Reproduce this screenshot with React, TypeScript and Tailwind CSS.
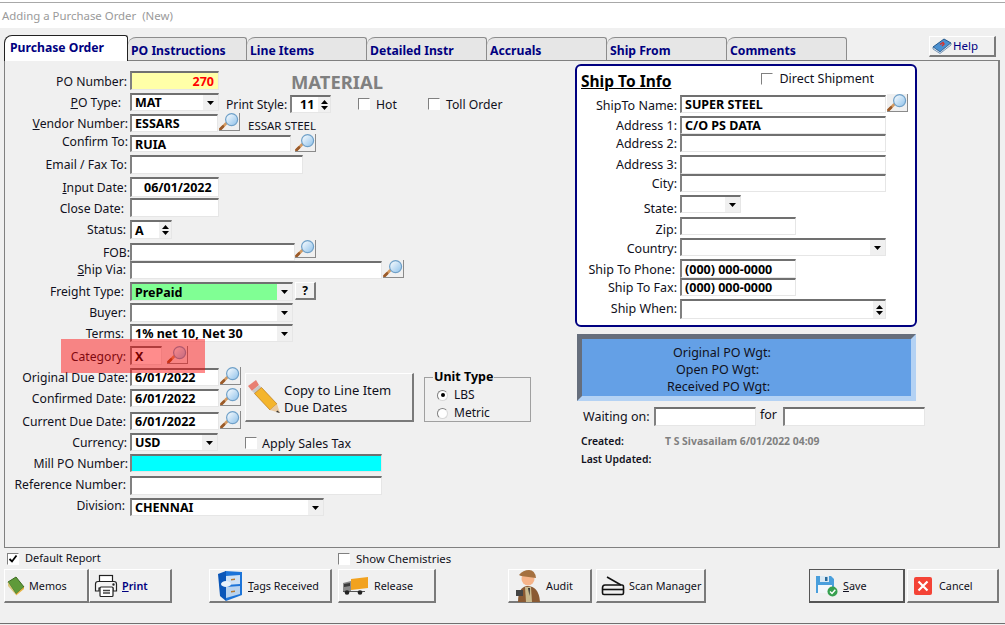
import React from "react";

const sunken = "border-t-2 border-l-2 border-r border-b border-t-[#707070] border-l-[#808080] border-r-[#e6e6e6] border-b-[#e6e6e6]";
const raised = "border-t border-l border-t-white border-l-white border-r-2 border-b-2 border-r-[#7a7a7a] border-b-[#7a7a7a] bg-[#f0f0f0]";

function Triangle({ up = false }: { up?: boolean }) {
  return (
    <svg width="7" height="4" viewBox="0 0 7 4" className="block">
      <path d={up ? "M0 4L3.5 0L7 4Z" : "M0 0L7 0L3.5 4Z"} fill="#000" />
    </svg>
  );
}

function Field({ className = "", value, valueClass = "", children }: { className?: string; value?: string; valueClass?: string; children?: React.ReactNode }) {
  return (
    <div className={`${sunken} flex items-center shrink-0 overflow-hidden bg-white ${className}`}>
      {value && <span className={`pl-[3px] pt-[2px] font-bold text-[12.5px] leading-none whitespace-nowrap ${valueClass || "text-black"}`}>{value}</span>}
      {children}
    </div>
  );
}

function Select({ className = "", value, fill = "" }: { className?: string; value?: string; fill?: string }) {
  return (
    <div className={`${sunken} flex items-stretch shrink-0 overflow-hidden bg-white ${className}`}>
      <div className={`flex-1 flex items-center min-w-0 ${fill}`}>
        {value && <span className="pl-[3px] pt-[2px] font-bold text-[12.5px] leading-none text-black whitespace-nowrap">{value}</span>}
      </div>
      <div className="w-[15px] bg-[#f0f0f0] flex items-center justify-center"><Triangle /></div>
    </div>
  );
}

function Spin({ className = "", value, valueClass = "pl-[3px]" }: { className?: string; value?: string; valueClass?: string }) {
  return (
    <div className={`${sunken} flex items-stretch shrink-0 overflow-hidden bg-white ${className}`}>
      <div className="flex-1 flex items-center min-w-0">
        {value && <span className={`pt-[2px] font-bold text-[12.5px] leading-none text-black ${valueClass}`}>{value}</span>}
      </div>
      <div className="w-[12px] bg-[#f0f0f0] flex flex-col items-center justify-center gap-[2px]"><Triangle up /><Triangle /></div>
    </div>
  );
}

function SearchBtn({ className = "" }: { className?: string }) {
  return (
    <div className={`w-[21px] h-[18px] shrink-0 bg-[#f0f0f0] border-r border-b border-r-[#8a8a8a] border-b-[#8a8a8a] ${className}`}>
      <svg width="20" height="17" viewBox="0 0 20 17" className="block">
        <defs>
          <linearGradient id="lens" x1="0" y1="0" x2="1" y2="1">
            <stop offset="0" stopColor="#ffffff" />
            <stop offset="1" stopColor="#8cc0ea" />
          </linearGradient>
        </defs>
        <path d="M1.5 16L7 10.5" stroke="#d39a62" strokeWidth="2.6" strokeLinecap="round" />
        <path d="M1.5 16L4 13.5" stroke="#9a5a2a" strokeWidth="2.6" strokeLinecap="round" />
        <circle cx="12.6" cy="6.6" r="6" fill="url(#lens)" stroke="#6fa0c8" strokeWidth="1.2" />
      </svg>
    </div>
  );
}

function Check({ checked = false, className = "" }: { checked?: boolean; className?: string }) {
  return (
    <span className={`w-[12px] h-[12px] shrink-0 block border-t border-l border-t-[#808080] border-l-[#808080] border-r border-b border-r-white border-b-white bg-white ${className}`}>
      {checked && (
        <svg width="10" height="10" viewBox="0 0 10 10" className="block">
          <path d="M1.5 5L4 7.5L8.5 1.5" stroke="#000" strokeWidth="1.8" fill="none" />
        </svg>
      )}
    </span>
  );
}

function Radio({ on = false }: { on?: boolean }) {
  return (
    <span className="w-[11px] h-[11px] rounded-full bg-white border border-t-[#808080] border-l-[#808080] border-r-[#d8d8d8] border-b-[#d8d8d8] flex items-center justify-center shrink-0">
      {on && <span className="w-[4px] h-[4px] rounded-full bg-black block" />}
    </span>
  );
}

function Row({ h, label, labelClass = "", children }: { h: string; label: React.ReactNode; labelClass?: string; children?: React.ReactNode }) {
  return (
    <div className={`flex items-start ${h}`}>
      <div className={`w-[125px] shrink-0 text-right pt-[1px] text-[12.2px] leading-[18px] whitespace-nowrap ${labelClass}`}>{label}</div>
      {children}
    </div>
  );
}

function ShipRow({ h, label, labelClass = "pr-[3px]", children }: { h: string; label: React.ReactNode; labelClass?: string; children?: React.ReactNode }) {
  return (
    <div className={`flex items-start ${h}`}>
      <div className={`w-[103px] shrink-0 text-right pt-[1px] leading-[18px] whitespace-nowrap ${labelClass}`}>{label}</div>
      {children}
    </div>
  );
}

function Tab({ label, active = false, className = "" }: { label: string; active?: boolean; className?: string }) {
  if (active) {
    return (
      <div className={`h-[26px] -mb-[1px] z-10 bg-white border-t border-l border-r border-[#222] rounded-tl-[8px] rounded-tr-[3px] flex items-center pl-[5px] font-bold text-[12.2px] text-[#000080] ${className}`}>
        {label}
      </div>
    );
  }
  return (
    <div className={`h-[23px] bg-[#e6e6e6] border-t border-r border-[#8c8c8c] rounded-tl-[8px] rounded-tr-[3px] flex items-center pl-[3px] pt-[4px] font-bold text-[12.2px] text-[#000080] ${className}`}>
      {label}
    </div>
  );
}

function Btn({ className = "", icon, children }: { className?: string; icon?: React.ReactNode; children: React.ReactNode }) {
  return (
    <div className={`h-[34px] shrink-0 flex items-center text-[10.8px] whitespace-nowrap ${raised} ${className}`}>
      {icon}
      <span className="pt-[1px]">{children}</span>
    </div>
  );
}

const BookIcon = () => (
  <svg width="18" height="20" viewBox="0 0 18 20" className="ml-[2px] mr-[4px] shrink-0">
    <path d="M1 6L9 1L17 11L9 18Z" fill="#5f9a3a" stroke="#3d6b22" strokeWidth="1" />
    <path d="M1 6L1 10L9 19L9 18Z" fill="#d9c77a" />
    <path d="M9 18L17 11L17 13L9 19.5Z" fill="#e9b341" />
  </svg>
);
const PrinterIcon = () => (
  <svg width="24" height="24" viewBox="0 0 24 24" className="ml-[4px] mr-[4px] shrink-0" fill="none" stroke="#222" strokeWidth="1.2">
    <rect x="5.5" y="1.5" width="13" height="7" fill="#fff" />
    <path d="M4 7.5H20Q22.5 7.5 22.5 10V17H19V14H5V17H1.5V10Q1.5 7.5 4 7.5Z" fill="#f4f4f4" />
    <rect x="6" y="13" width="13" height="9.5" rx="1" fill="#fff" />
    <path d="M9 16.5H16M9 19H16" stroke="#444" strokeWidth="1.4" />
    <circle cx="19.5" cy="10.5" r=".6" fill="#222" />
  </svg>
);
const CabinetIcon = () => (
  <svg width="26" height="32" viewBox="0 0 26 32" className="ml-[7px] mr-[5px] shrink-0">
    <path d="M8 1L25 2V25L9 31Z" fill="#1c74d8" />
    <path d="M1 4L9 1V31L3 26Z" fill="#0a56b8" />
    <path d="M9 6L23 5V14L9 15Z" fill="#cfe2f5" />
    <path d="M9 17L23 16V24L9 28Z" fill="#b9d3ee" />
    <path d="M14 9L18 8.5V10L14 10.5ZM14 21L18 20.5V22L14 22.5Z" fill="#b57a32" />
    <ellipse cx="9" cy="14" rx="5" ry="3" fill="#e8f1fa" />
  </svg>
);
const TruckIcon = () => (
  <svg width="26" height="18" viewBox="0 0 26 18" className="ml-[4px] mr-[5px] shrink-0">
    <path d="M8 2L25 0V11L8 13Z" fill="#f2a21f" />
    <path d="M0 6L8 4V14H0Z" fill="#8a8a8a" />
    <path d="M1 7L7 6V9L1 10Z" fill="#3a3a3a" />
    <path d="M0 14H22V15H0Z" fill="#555" />
    <circle cx="4" cy="15.5" r="2.3" fill="#222" />
    <circle cx="17" cy="15.5" r="2.3" fill="#222" />
  </svg>
);
const DetectiveIcon = () => (
  <svg width="30" height="33" viewBox="0 0 30 33" className="ml-[3px] mr-[4px] shrink-0">
    <path d="M6 33Q6 18 15 17Q27 17 28 33Z" fill="#8a5a33" />
    <path d="M13 18L19 18L20 33H14Z" fill="#c9b98e" />
    <path d="M16 19L18 19L17.5 27Z" fill="#333" />
    <circle cx="16" cy="10" r="6.5" fill="#f6b48a" />
    <path d="M7 6Q11 1 17 1Q23 1 24 9L9 7Z" fill="#a4703f" />
    <rect x="4" y="21" width="7" height="6" fill="#444" />
  </svg>
);
const ScannerIcon = () => (
  <svg width="24" height="20" viewBox="0 0 24 20" className="ml-[4px] mr-[4px] shrink-0" fill="none" stroke="#111" strokeWidth="1.6">
    <path d="M6 1L20 9" />
    <path d="M4 9H21Q22.5 9 22.5 11V17Q22.5 18.5 21 18.5H3Q1.5 18.5 1.5 17V12Q1.5 9 4 9Z" />
    <path d="M2 13.5H22" />
  </svg>
);
const SaveIcon = () => (
  <svg width="24" height="22" viewBox="0 0 24 22" className="ml-[5px] mr-[4px] shrink-0">
    <path d="M1 1H16L19 4V18H1Z" fill="#4a9fdc" />
    <rect x="5" y="1" width="9" height="6" fill="#d9e8f3" />
    <rect x="10" y="2" width="2.5" height="4" fill="#2a6a9a" />
    <rect x="3" y="10" width="14" height="8" fill="#f3f7fa" />
    <circle cx="17.5" cy="16.5" r="5" fill="#37a04f" />
    <path d="M15 16.5L17 18.5L20.3 14.7" stroke="#fff" strokeWidth="1.4" fill="none" />
  </svg>
);
const CancelIcon = () => (
  <svg width="18" height="18" viewBox="0 0 18 18" className="ml-[6px] mr-[7px] shrink-0">
    <rect width="18" height="18" rx="2" fill="#f44336" />
    <path d="M4.5 4.5L13.5 13.5M13.5 4.5L4.5 13.5" stroke="#fff" strokeWidth="2.2" />
  </svg>
);
const HelpIcon = () => (
  <svg width="20" height="16" viewBox="0 0 20 16" className="ml-[2px] mr-[1px] shrink-0">
    <path d="M1 9L12 1L19 5L8 14Z" fill="#4a90d0" stroke="#24588c" strokeWidth="1" />
    <path d="M1 9L1 11L8 15.5L19 7L19 5L8 14Z" fill="#e8eef5" stroke="#24588c" strokeWidth=".6" />
    <path d="M8 6.5L11 4.5L12 6L10 8" stroke="#d8322a" strokeWidth="1.4" fill="none" />
  </svg>
);
const PencilIcon = () => (
  <svg width="34" height="34" viewBox="0 0 34 34" className="shrink-0">
    <path d="M9 0L1 6L5 11L12 5Z" fill="#e87f72" />
    <path d="M5 11L12 5L14.5 7.5L7.5 13.5Z" fill="#c8c8c8" />
    <path d="M7.5 13.5L14.5 7.5L30 24L23 30Z" fill="#f4b52c" stroke="#b9791a" strokeWidth=".7" />
    <path d="M23 30L30 24L33 33Z" fill="#e8c9a0" />
    <path d="M30.5 30.5L33 33L29 32Z" fill="#333" />
  </svg>
);

export default function App() {
  return (
    <div className="w-[1005px] h-[625px] overflow-hidden bg-[#f0f0f0] flex flex-col text-[12.5px] text-[#101020] font-['Noto_Sans',sans-serif]">
      <div className="h-[2px] shrink-0 bg-white" />
      <div className="h-[1px] shrink-0 bg-[#a8a8a8]" />
      <div className="h-[25px] shrink-0 bg-white flex items-center pl-[2px] pt-[1px] text-[11.4px] text-[#9a9a9a] whitespace-pre">Adding a Purchase Order  (New)</div>

      <div className="h-[32px] shrink-0 pl-[4px] pr-[9px] flex items-end">
        <Tab active label="Purchase Order" className="w-[124px]" />
        <Tab label="PO Instructions" className="w-[119px]" />
        <Tab label="Line Items" className="w-[120px]" />
        <Tab label="Detailed Instr" className="w-[120px]" />
        <Tab label="Accruals" className="w-[120px]" />
        <Tab label="Ship From" className="w-[120px]" />
        <Tab label="Comments" className="w-[120px]" />
        <div className={`ml-[82px] mb-[3px] w-[67px] h-[21px] flex items-center text-[11.5px] text-[#000080] ${raised}`}>
          <HelpIcon />Help
        </div>
      </div>

      <div className="relative h-[488px] shrink-0 mx-[4px] w-[996px] border border-[#808080] border-r-2 flex">
        <div className="absolute left-[56px] top-[278px] w-[144px] h-[34px] bg-[#ff0000]/45 z-10" />

        <div className="w-[570px] shrink-0 pt-[10px]">
          <Row h="h-[22px]" label="PO Number:" labelClass="mt-[1px] pr-[3px]">
            <Field className="w-[89px] h-[19px] !bg-[#ffffa8] justify-end" value="270" valueClass="text-[#ff0000] pr-[4px]" />
            <span className="ml-[72px] font-bold text-[18.4px] leading-[22px] text-[#808080]">MATERIAL</span>
          </Row>
          <Row h="h-[21px]" label={<><u>P</u>O Type:</>} labelClass="pr-[9px]">
            <Select className="w-[89px] h-[18px]" value="MAT" />
            <span className="ml-[7px] mt-[3px] w-[60px] leading-[18px] text-[12.2px] whitespace-nowrap">Print Style:</span>
            <Spin className="ml-[4px] mt-[2px] w-[41px] h-[18px]" value="11" valueClass="pl-[8px]" />
            <Check className="ml-[27px] mt-[5px]" />
            <span className="ml-[6px] mt-[3px] w-[18px] leading-[18px] text-[12.2px]">Hot</span>
            <Check className="ml-[34px] mt-[5px]" />
            <span className="ml-[6px] mt-[3px] leading-[18px] text-[12.2px]">Toll Order</span>
          </Row>
          <Row h="h-[21px]" label={<><u>V</u>endor Number:</>} labelClass="pr-[2px]">
            <Field className="w-[88px] h-[18px]" value="ESSARS" />
            <SearchBtn className="ml-[1px] -mt-[1px]" />
            <span className="ml-[8px] mt-[3px] leading-[18px] text-[11.5px]">ESSAR STEEL</span>
          </Row>
          <Row h="h-[20px]" label="Confirm To:" labelClass="-mt-[3px] pr-[2px]">
            <Field className="w-[161px] h-[17px] items-end" value="RUIA" />
            <SearchBtn className="ml-[4px] -mt-[1px]" />
          </Row>
          <Row h="h-[22px]" label="Email / Fax To:" labelClass="pr-[3px]">
            <Field className="w-[173px] h-[19px]" />
          </Row>
          <Row h="h-[21px]" label={<><u>I</u>nput Date:</>} labelClass="mt-[1px] pr-[3px]">
            <Field className="w-[89px] h-[20px]" value="06/01/2022" valueClass="pl-[12px] text-black" />
          </Row>
          <Row h="h-[22px]" label="Close Date:" labelClass="mt-[1px] pr-[6px]">
            <Field className="w-[89px] h-[19px]" />
          </Row>
          <Row h="h-[23px]" label="Status:" labelClass="pr-[4px]">
            <Spin className="w-[42px] h-[19px]" value="A" />
          </Row>
          <Row h="h-[18px]" label="FOB:" labelClass="pr-[0px]">
            <Field className="w-[165px] h-[18px]" />
            <SearchBtn className="-mt-[3px]" />
          </Row>
          <Row h="h-[21px]" label={<><u>S</u>hip Via:</>} labelClass="-mt-[1px] pr-[4px]">
            <Field className="w-[252px] h-[18px]" />
            <SearchBtn className="ml-[1px] -mt-[1px]" />
          </Row>
          <Row h="h-[21px]" label="Freight Type:" labelClass="pr-[6px]">
            <Select className="w-[163px] h-[19px]" value="PrePaid" fill="bg-[#80ff94]" />
            <div className={`ml-[2px] w-[21px] h-[18px] flex items-center justify-center font-bold text-[12px] text-black ${raised}`}>?</div>
          </Row>
          <Row h="h-[21px]" label="Buyer:" labelClass="pr-[4px]">
            <Select className="w-[163px] h-[19px]" />
          </Row>
          <Row h="h-[22px]" label="Terms:" labelClass="pr-[6px]">
            <Select className="w-[163px] h-[18px]" value="1% net 10, Net 30" />
          </Row>
          <Row h="h-[22px]" label="Category:" labelClass="mt-[1px] pr-[4px]">
            <Field className="w-[32px] h-[19px]" value="X" />
            <SearchBtn className="ml-[5px]" />
          </Row>

          <div className="flex items-start">
            <div className="w-[240px] shrink-0">
              <Row h="h-[21px]" label="Original Due Date:" labelClass="pr-[2px]">
                <Field className="w-[89px] h-[18px]" value="6/01/2022" />
                <SearchBtn className="ml-[1px] -mt-[1px]" />
              </Row>
              <Row h="h-[23px]" label="Confirmed Date:" labelClass="pr-[4px]">
                <Field className="w-[89px] h-[18px]" value="6/01/2022" />
                <SearchBtn className="ml-[1px] -mt-[1px]" />
              </Row>
              <Row h="h-[21px]" label="Current Due Date:" labelClass="pr-[4px]">
                <Field className="w-[89px] h-[18px]" value="6/01/2022" />
                <SearchBtn className="ml-[1px] -mt-[1px]" />
              </Row>
            </div>
            <div className={`mt-[5px] w-[169px] h-[49px] flex items-center pl-[1px] ${raised}`}>
              <PencilIcon />
              <div className="ml-[3px] pt-[3px] leading-[17px] text-[13px]">Copy to Line Item<br />Due Dates</div>
            </div>
            <fieldset className="ml-[10px] mt-[3px] w-[107px] h-[51px] border border-[#a0a0a0] pl-[12px] pt-[3px]">
              <legend className="font-bold text-[12.5px] leading-[12px] text-black ml-[-4px] px-[1px]">Unit Type</legend>
              <div className="flex items-center gap-[6px] leading-[18px] text-[12px]"><Radio on />LBS</div>
              <div className="flex items-center gap-[6px] leading-[18px] text-[12px]"><Radio />Metric</div>
            </fieldset>
          </div>

          <Row h="h-[21px]" label="Currency:" labelClass="pr-[3px]">
            <Select className="w-[88px] h-[18px]" value="USD" />
            <Check className="ml-[27px] mt-[4px]" />
            <span className="ml-[5px] mt-[2px] leading-[18px] text-[12.5px]">Apply Sales Tax</span>
          </Row>
          <Row h="h-[22px]" label="Mill PO Number:" labelClass="pr-[2px]">
            <Field className="w-[252px] h-[18px] !bg-[#00ffff]" />
          </Row>
          <Row h="h-[22px]" label="Reference Number:" labelClass="-mt-[1px] pr-[4px]">
            <Field className="w-[252px] h-[19px]" />
          </Row>
          <Row h="h-[18px]" label="Division:" labelClass="-mt-[2px] pr-[5px]">
            <Select className="w-[194px] h-[18px]" value="CHENNAI" />
          </Row>
        </div>

        <div className="w-[350px] shrink-0 pt-[3px]">
          <div className="w-[342px] h-[263px] bg-white border-2 border-[#000080] rounded-[6px]">
            <div className="h-[29px] flex items-center">
              <span className="ml-[4px] pt-[2px] font-bold text-[15.5px] text-black underline">Ship To Info</span>
              <Check className="ml-[90px] -mt-[4px]" />
              <span className="ml-[6px] -mt-[2px]">Direct Shipment</span>
            </div>
            <ShipRow h="h-[21px]" label="ShipTo Name:" labelClass="mt-[1px] pr-[3px]">
              <Field className="w-[206px] h-[18px]" value="SUPER STEEL" />
              <SearchBtn className="ml-[1px] -mt-[1px]" />
            </ShipRow>
            <ShipRow h="h-[18px]" label="Address 1:">
              <Field className="w-[206px] h-[18px]" value="C/O PS DATA" />
            </ShipRow>
            <ShipRow h="h-[21px]" label="Address 2:">
              <Field className="w-[206px] h-[18px]" />
            </ShipRow>
            <ShipRow h="h-[19px]" label="Address 3:">
              <Field className="w-[206px] h-[19px]" />
            </ShipRow>
            <ShipRow h="h-[21px]" label="City:">
              <Field className="w-[206px] h-[18px]" />
            </ShipRow>
            <ShipRow h="h-[22px]" label="State:" labelClass="mt-[4px] pr-[3px]">
              <Select className="w-[61px] h-[18px]" />
            </ShipRow>
            <ShipRow h="h-[21px]" label="Zip:" labelClass="mt-[3px] pr-[3px]">
              <Field className="w-[116px] h-[18px]" />
            </ShipRow>
            <ShipRow h="h-[21px]" label="Country:" labelClass="mt-[1px] pr-[3px]">
              <Select className="w-[206px] h-[18px]" />
            </ShipRow>
            <ShipRow h="h-[19px]" label="Ship To Phone:" labelClass="mt-[1px] pr-[5px]">
              <Field className="w-[116px] h-[19px]" value="(000) 000-0000" />
            </ShipRow>
            <ShipRow h="h-[21px]" label="Ship To Fax:">
              <Field className="w-[116px] h-[18px]" value="(000) 000-0000" />
            </ShipRow>
            <ShipRow h="h-[20px]" label="Ship When:">
              <Spin className="w-[206px] h-[20px]" />
            </ShipRow>
          </div>

          <div className="mt-[7px] ml-[2px] w-[339px] h-[67px] bg-[#64a0e6] border-[5px] border-t-[#666e7c] border-l-[#666e7c] border-r-[#b4d2f4] border-b-[#b4d2f4] flex flex-col items-start pt-[5px] leading-[17px] text-[12.5px]">
            <span className="ml-[91px]">Original PO Wgt:</span>
            <span className="ml-[94px]">Open PO Wgt:</span>
            <span className="ml-[85px]">Received PO Wgt:</span>
          </div>

          <div className="mt-[5px] flex items-center">
            <span className="ml-[8px] w-[71px] pt-[2px]">Waiting on:</span>
            <Field className="w-[102px] h-[19px]" />
            <span className="ml-[4px] w-[23px] -mt-[2px]">for</span>
            <Field className="w-[142px] h-[19px]" />
          </div>
          <div className="mt-[6px] ml-[6px] flex items-center h-[18px] text-[10.4px] font-semibold">
            <span className="w-[84px]">Created:</span>
            <span className="text-[#808080] font-bold">T S Sivasailam 6/01/2022 04:09</span>
          </div>
          <div className="ml-[6px] flex items-center h-[18px] text-[10.4px] font-semibold">Last Updated:</div>
        </div>
      </div>

      <div className="h-[21px] shrink-0 flex items-center text-[11px]">
        <Check checked className="ml-[7px]" />
        <span className="ml-[6px] w-[76px] whitespace-nowrap">Default Report</span>
        <Check className="ml-[237px]" />
        <span className="ml-[6px] text-[11.4px]">Show Chemistries</span>
      </div>
      <div className="flex shrink-0 pl-[4px]">
        <Btn className="w-[85px]" icon={<BookIcon />}>Memos</Btn>
        <Btn className="w-[83px] font-semibold text-[#000080]" icon={<PrinterIcon />}><u>P</u>rint</Btn>
        <Btn className="ml-[37px] w-[123px]" icon={<CabinetIcon />}><u>T</u>ags Received</Btn>
        <Btn className="ml-[6px] w-[98px]" icon={<TruckIcon />}>Release</Btn>
        <Btn className="ml-[72px] w-[84px]" icon={<DetectiveIcon />}>Audit</Btn>
        <Btn className="ml-[4px] w-[110px]" icon={<ScannerIcon />}>Scan Manager</Btn>
        <Btn className="ml-[103px] w-[96px] !border-t-[#555] !border-l-[#555] !border-r-[#555] !border-b-[#555]" icon={<SaveIcon />}><u>S</u>ave</Btn>
        <Btn className="ml-[2px] w-[92px]" icon={<CancelIcon />}>Cancel</Btn>
      </div>
      <div className="mt-[20px] h-[1px] shrink-0 bg-[#707070]" />
    </div>
  );
}
